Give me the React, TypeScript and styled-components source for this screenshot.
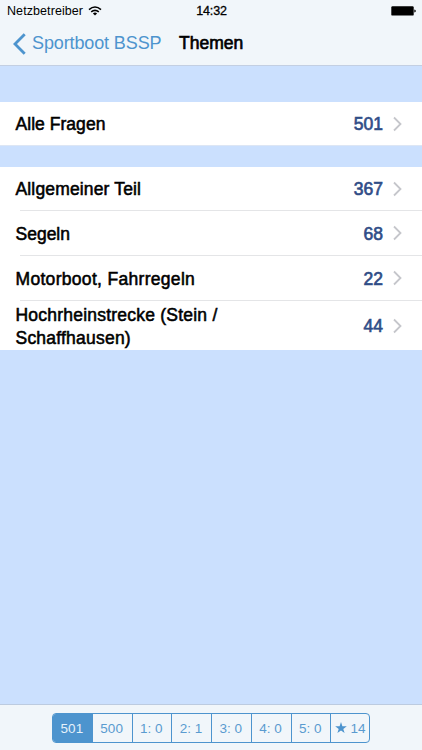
import React from "react";
import styled, { createGlobalStyle } from "styled-components";

const GlobalStyle = createGlobalStyle`
  * { box-sizing: border-box; }
  body { margin: 0; }
`;

const Screen = styled.div`
  width: 422px;
  height: 750px;
  display: flex;
  flex-direction: column;
  overflow: hidden;
  background: #cbe0fe;
  color: #000;
  font-family: "Liberation Sans", Arial, sans-serif;
`;

const Header = styled.header`
  height: 66px;
  flex: none;
  background: #f1f6fa;
  border-bottom: 1px solid #c3cfe2;
`;

const StatusBar = styled.div`
  height: 22px;
  display: grid;
  grid-template-columns: 1fr auto 1fr;
  align-items: center;
  padding: 0 6px 0 7px;
  font-size: 12.5px;
  line-height: 22px;
`;

const Carrier = styled.div`
  display: flex;
  align-items: center;
  gap: 5px;
  letter-spacing: 0.08px;
`;

const Clock = styled.div`
  -webkit-text-stroke: 0.3px currentColor;
  letter-spacing: -0.2px;
`;

const Battery = styled.div`
  display: flex;
  justify-content: flex-end;
`;

const NavBar = styled.div`
  height: 43px;
  display: flex;
  align-items: center;
  padding-left: 13px;
`;

const BackButton = styled.a`
  display: flex;
  align-items: center;
  gap: 6px;
  width: 166px;
  color: #4d94ce;
  font-size: 18px;
  letter-spacing: -0.12px;
  white-space: nowrap;
`;

const Title = styled.h1`
  margin: 0;
  font-size: 17.5px;
  font-weight: 400;
  -webkit-text-stroke: 0.65px currentColor;
  letter-spacing: 0;
`;

const Content = styled.main`
  flex: 1;
  display: flex;
  flex-direction: column;
  gap: 21px;
  padding-top: 36px;
`;

const Group = styled.section<{ $outlined?: boolean }>`
  background: #fff;
  border-bottom: ${(p) => (p.$outlined ? "1px solid #dde6f4" : "none")};
`;

const Row = styled.div<{ $height: number }>`
  height: ${(p) => p.$height}px;
  display: flex;
  align-items: center;
  padding: 0 20px 0 15.5px;
`;

const Separator = styled.div`
  height: 1px;
  margin-left: 20px;
  background: #e4e5e7;
`;

const Label = styled.div<{ $spacing: number }>`
  flex: 1;
  padding-top: 2px;
  font-size: 17.5px;
  line-height: 22.5px;
  -webkit-text-stroke: 0.55px currentColor;
  letter-spacing: ${(p) => p.$spacing}px;
  white-space: pre-line;
`;

const Count = styled.div`
  margin-right: 10px;
  padding-top: 2px;
  color: #304d87;
  font-size: 17.5px;
  -webkit-text-stroke: 0.65px currentColor;
`;

const Toolbar = styled.footer`
  height: 46px;
  flex: none;
  display: flex;
  justify-content: center;
  padding-top: 8px;
  background: #f1f6fa;
  border-top: 1px solid #bccbe0;
`;

const Segments = styled.div`
  width: 318px;
  height: 30px;
  display: flex;
  border: 1px solid #4d94ce;
  border-radius: 4px;
  overflow: hidden;
`;

const Segment = styled.div<{ $active?: boolean }>`
  flex: 1 1 0;
  display: flex;
  align-items: center;
  justify-content: center;
  gap: 4px;
  padding-right: 1px;
  font-size: 13.5px;
  letter-spacing: 0;
  white-space: nowrap;
  color: ${(p) => (p.$active ? "#e6f1fa" : "#5a9bd0")};
  background: ${(p) => (p.$active ? "#4d94ce" : "transparent")};
  & + & { border-left: 1px solid #4d94ce; }
  &:last-child { padding-right: 0; }
`;

const Chevron = () => (
  <svg width="9" height="16" viewBox="0 0 9 16" fill="none">
    <path d="M1 1.5L7.5 8L1 14.5" stroke="#c5c6cb" strokeWidth="1.8" />
  </svg>
);

const topics = [
  { name: "Allgemeiner Teil", count: 367, height: 43, spacing: 0.15 },
  { name: "Segeln", count: 68, height: 44, spacing: 0 },
  { name: "Motorboot, Fahrregeln", count: 22, height: 44, spacing: 0.31 },
  { name: "Hochrheinstrecke (Stein /\nSchaffhausen)", count: 44, height: 49, spacing: 0.22 },
];

const boxes = ["500", "1: 0", "2: 1", "3: 0", "4: 0", "5: 0"];

export default function App() {
  return (
    <>
      <GlobalStyle />
      <Screen>
        <Header>
          <StatusBar>
            <Carrier>
              Netzbetreiber
              <svg width="14" height="10" viewBox="0 0 14 10" fill="none" stroke="#000" strokeWidth="1.6">
                <path d="M1 3.6Q7-1.6 13 3.6" />
                <path d="M3.2 5.9Q7 2.7 10.8 5.9" />
                <path d="M7 9.6L4.9 7.4Q7 5.8 9.1 7.4Z" fill="#000" stroke="none" />
              </svg>
            </Carrier>
            <Clock>14:32</Clock>
            <Battery>
              <svg width="25" height="10" viewBox="0 0 25 10">
                <rect x="0.3" y="0.2" width="22.4" height="9.4" rx="1.2" fill="#000" />
                <path d="M23.3 3.4Q24.8 3.7 24.8 5T23.3 6.6Z" fill="#000" />
              </svg>
            </Battery>
          </StatusBar>
          <NavBar>
            <BackButton>
              <svg width="13" height="22" viewBox="0 0 13 22" fill="none">
                <path d="M11.7 1.2L2 11L11.7 20.8" stroke="#4d94ce" strokeWidth="2.8" />
              </svg>
              Sportboot BSSP
            </BackButton>
            <Title>Themen</Title>
          </NavBar>
        </Header>
        <Content>
          <Group $outlined>
            <Row $height={43}>
              <Label $spacing={0.04}>Alle Fragen</Label>
              <Count>501</Count>
              <Chevron />
            </Row>
          </Group>
          <Group>
            {topics.map((t, i) => (
              <React.Fragment key={t.name}>
                {i > 0 && <Separator />}
                <Row $height={t.height}>
                  <Label $spacing={t.spacing}>{t.name}</Label>
                  <Count>{t.count}</Count>
                  <Chevron />
                </Row>
              </React.Fragment>
            ))}
          </Group>
        </Content>
        <Toolbar>
          <Segments>
            <Segment $active>501</Segment>
            {boxes.map((b) => (
              <Segment key={b}>{b}</Segment>
            ))}
            <Segment>
              <svg width="12" height="12" viewBox="0 0 12 12" fill="#4d94ce">
                <path d="M6 0L7.4 4.2H11.8L8.3 6.9L9.6 11.1L6 8.5L2.4 11.1L3.7 6.9L0.2 4.2H4.6Z" />
              </svg>
              14
            </Segment>
          </Segments>
        </Toolbar>
      </Screen>
    </>
  );
}
